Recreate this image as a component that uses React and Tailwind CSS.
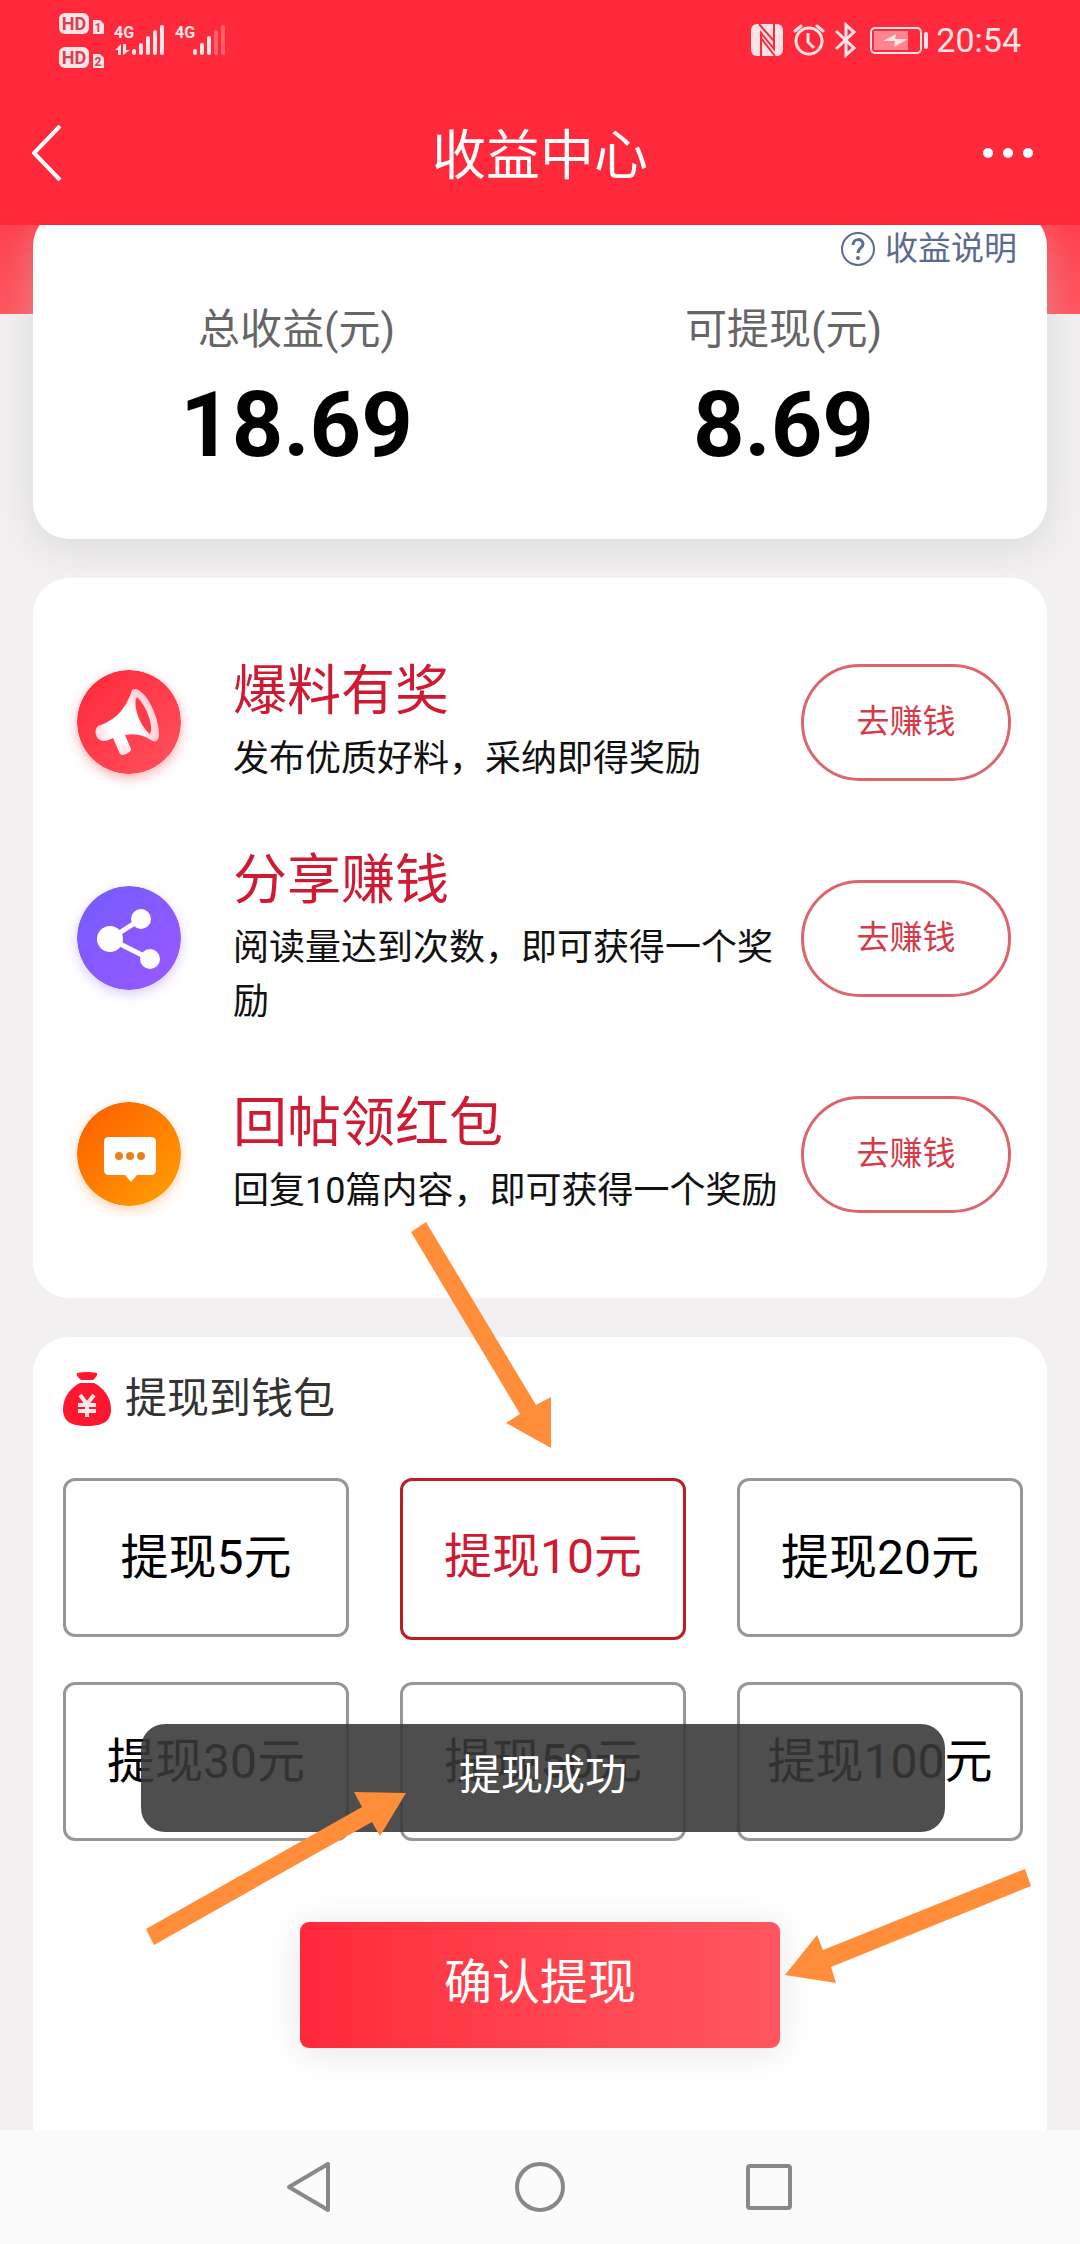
import React, { useState } from 'react';

const tasks = [
  { icon: 'horn', title: '爆料有奖', desc: '发布优质好料，采纳即得奖励' },
  { icon: 'share', title: '分享赚钱', desc: '阅读量达到次数，即可获得一个奖励' },
  { icon: 'chat', title: '回帖领红包', desc: '回复10篇内容，即可获得一个奖励' }
];

const amounts = [5, 10, 20, 30, 50, 100];

const SignalIcons = () => (
  <svg width="170" height="60" viewBox="58 10 170 60" fill="#ffe3e6" fontFamily="Roboto, sans-serif" aria-hidden="true">
    <rect x="59" y="13" width="30" height="21" rx="6" />
    <rect x="59" y="47" width="30" height="21" rx="6" />
    <text x="74" y="30" fontSize="18" fontWeight="700" textAnchor="middle" fill="#d8404f">HD</text>
    <text x="74" y="64" fontSize="18" fontWeight="700" textAnchor="middle" fill="#d8404f">HD</text>
    <path d="M93 20h7l4 4v10h-11zM93 54h7l4 4v10h-11z" />
    <text x="98" y="32" fontSize="12" fontWeight="700" textAnchor="middle" fill="#d8404f">1</text>
    <text x="98" y="66" fontSize="12" fontWeight="700" textAnchor="middle" fill="#d8404f">2</text>
    <text x="114" y="38" fontSize="16" fontWeight="700">4G</text>
    <text x="175" y="38" fontSize="16" fontWeight="700">4G</text>
    <path d="M115 50l6-6v11h-3v-5zM123 44h3v6h4l-7 5z" />
    <g stroke="#ffe3e6" strokeWidth="4" strokeLinecap="round">
      <path d="M134 51v2M141 45v8M148 38v15M155 32v21M162 27v26" />
      <path d="M195 51v2M202 45v8M209 38v15" />
      <path d="M216 32v21M223 27v26" opacity="0.3" />
    </g>
  </svg>
);

const DeviceIcons = () => (
  <svg width="180" height="36" viewBox="750 22 180 36" fill="none" stroke="#ffe3e6" strokeWidth="3" aria-hidden="true">
    <rect x="751" y="24" width="32" height="32" rx="6" fill="#ffe3e6" stroke="none" />
    <path d="M761 56V33l13 16V24" stroke="#ff293c" strokeWidth="2" />
    <path d="M759 24l15 17M761 38l14 18" stroke="#ff293c" strokeWidth="2" />
    <circle cx="809" cy="41" r="13" strokeWidth="3" />
    <path d="M808 33v9l6 6" strokeWidth="3" />
    <path d="M795 31l6-5M823 31l-6-5" strokeLinecap="round" strokeWidth="3" />
    <path d="M836 31l18 17-8 7V25l8 7-18 17" />
    <rect x="871" y="28" width="50" height="25" rx="4" strokeWidth="2" />
    <rect x="874" y="31" width="34" height="19" fill="#ff8490" stroke="none" />
    <path d="M883 41l13-7-1 5h13l-14 8 1-6z" fill="#ffe3e6" stroke="none" />
    <path d="M926 34v13" strokeWidth="4" strokeLinecap="round" />
  </svg>
);

const TaskIcon = ({ type }) => {
  if (type === 'horn') {
    return (
      <svg className="w-26 h-26 shrink-0 rounded-full shadow-[0_4px_12px_rgba(255,60,75,0.4)]" viewBox="0 0 104 104" aria-hidden="true">
        <defs>
          <linearGradient id="hornBg" x1="0" y1="0" x2="1" y2="1">
            <stop offset="0" stopColor="#ff2739" />
            <stop offset="1" stopColor="#ff525d" />
          </linearGradient>
          <radialGradient id="hornFill" cx="0.45" cy="0.55" r="0.6">
            <stop offset="0" stopColor="#fff" />
            <stop offset="0.4" stopColor="#fff" />
            <stop offset="1" stopColor="#ffc4ca" />
          </radialGradient>
        </defs>
        <circle cx="52" cy="52" r="52" fill="url(#hornBg)" />
        <path
          d="M55 20c4-3 9 1 14 7 8 11 13 26 13 38 0 6-4 8-8 5-8-5-16-7-26-5l6 14c1 3-9 8-11 5l-7-16c-3 1-6 3-9 3-8 0-11-10-6-15 15-5 27-14 34-36z"
          fill="url(#hornFill)"
        />
        <path d="M60 27c-5 7 3 30 13 37 4-8-4-29-13-37z" fill="#ff3b4b" />
      </svg>
    );
  }
  if (type === 'share') {
    return (
      <svg className="w-26 h-26 shrink-0 rounded-full shadow-[0_4px_12px_rgba(130,90,255,0.3)]" viewBox="0 0 104 104" aria-hidden="true">
        <defs>
          <linearGradient id="shareBg" x1="0" y1="0" x2="1" y2="1">
            <stop offset="0" stopColor="#735cff" />
            <stop offset="1" stopColor="#9a58ff" />
          </linearGradient>
        </defs>
        <circle cx="52" cy="52" r="52" fill="url(#shareBg)" />
        <path d="M64 33L33 53l40 20" fill="none" stroke="#fff" strokeWidth="5" />
        <circle cx="33" cy="53" r="13" fill="#fff" />
        <circle cx="64" cy="33" r="10" fill="#fff" />
        <circle cx="73" cy="73" r="10" fill="#fff" />
      </svg>
    );
  }
  return (
    <svg className="w-26 h-26 shrink-0 rounded-full shadow-[0_4px_12px_rgba(255,130,40,0.35)]" viewBox="0 0 104 104" aria-hidden="true">
      <defs>
        <linearGradient id="chatBg" x1="0" y1="0" x2="1" y2="1">
          <stop offset="0.1" stopColor="#ff6200" />
          <stop offset="1" stopColor="#ffa200" />
        </linearGradient>
      </defs>
      <circle cx="52" cy="52" r="52" fill="url(#chatBg)" />
      <path d="M32 35h42q5 0 5 5v28q0 5-5 5H60l-6 7-6-7H32q-5 0-5-5V40q0-5 5-5z" fill="#fff" />
      <circle cx="42" cy="54" r="4" fill="#e8821c" />
      <circle cx="53" cy="54" r="4" fill="#e8821c" />
      <circle cx="64" cy="54" r="4" fill="#e8821c" />
    </svg>
  );
};

const MoneyBag = () => (
  <svg className="w-12 h-[54px]" viewBox="0 0 48 54" aria-hidden="true">
    <path d="M14 1q10-2 20 0 1 3-4 7H18q-5-4-4-7z" fill="#ff1730" />
    <path d="M17 11h14c10 5 17 15 17 26 0 11-6 17-24 17S0 48 0 37c0-11 7-21 17-26z" fill="#ff1730" />
    <path d="M17 23l7 9 7-9M24 32v13M15 33h18M15 39h18" fill="none" stroke="#ffe9eb" strokeWidth="4" />
  </svg>
);

const Arrow = ({ className, viewBox, points }) => (
  <svg className={className} viewBox={viewBox} aria-hidden="true">
    <polygon points={points} fill="#ff8d3a" />
  </svg>
);

const App = () => {
  const [selected, setSelected] = useState(10);

  return (
    <div className="h-screen flex flex-col bg-[#f2f0f1] font-['Roboto','Noto_Sans_CJK_SC',sans-serif]" lang="zh-CN">
      <header className="shrink-0 bg-[#ff293c] text-white">
        <div className="h-20 flex items-center justify-between pl-[58px] pr-[59px]">
          <SignalIcons />
          <div className="flex items-center gap-1.5 text-[34px] leading-10 text-[#ffe3e6]">
            <DeviceIcons />
            <span>20:54</span>
          </div>
        </div>
        <div className="h-[145px] flex items-center justify-between pl-8 pr-[47px]">
          <button type="button" aria-label="返回" className="w-20">
            <svg width="30" height="56" viewBox="0 0 30 56" fill="none" stroke="currentColor" strokeWidth="4">
              <path d="M28 1L2 28l26 27" />
            </svg>
          </button>
          <h1 className="text-[54px] leading-[72px] pt-2">收益中心</h1>
          <button type="button" aria-label="更多" className="w-[65px] flex justify-end">
            <svg width="50" height="12" viewBox="0 0 50 12" fill="currentColor">
              <circle cx="5" cy="6" r="5" />
              <circle cx="25" cy="6" r="5" />
              <circle cx="45" cy="6" r="5" />
            </svg>
          </button>
        </div>
      </header>

      <main className="flex-1 min-h-0 overflow-hidden flex flex-col">
        <div className="shrink-0 h-[89px] bg-gradient-to-b from-[#ff414e] to-[#ff555f]" />
        <div className="flex-1 flex flex-col gap-[39px] px-[33px] -mt-[104px]">
          <section className="h-[329px] shrink-0 bg-white rounded-[36px] px-5 pt-[15px] shadow-[0_9px_36px_rgba(195,193,194,0.45)]">
            <a href="#explain" className="flex items-center justify-end gap-2.5 pr-2.5 text-[33px] leading-[48px] text-[#5c6b8f]">
              <svg width="34" height="34" viewBox="0 0 34 34" fill="none" stroke="currentColor" strokeWidth="2" aria-hidden="true">
                <circle cx="17" cy="17" r="16" />
                <path d="M12 13c0-7 10-7 10-1 0 4-5 4-5 9" strokeWidth="3" />
                <circle cx="17" cy="26" r="1" strokeWidth="2" />
              </svg>
              收益说明
            </a>
            <div className="grid grid-cols-2 pt-[27px] text-center">
              <div>
                <p className="text-[42px] leading-[60px] text-[#666]">总收益(元)</p>
                <p className="pt-1.5 text-[90px] leading-[120px] font-bold text-black">18.69</p>
              </div>
              <div>
                <p className="text-[42px] leading-[60px] text-[#666]">可提现(元)</p>
                <p className="pt-1.5 text-[90px] leading-[120px] font-bold text-black">8.69</p>
              </div>
            </div>
          </section>

          <section className="shrink-0 bg-white rounded-[36px] py-9 pl-11 pr-9">
            {tasks.map(t => (
              <div key={t.title} className="h-[216px] flex items-center">
                <TaskIcon type={t.icon} />
                <div className="flex-1 pl-[52px] pb-2">
                  <h2 className="text-[54px] leading-[81px] text-[#cf1a33]">{t.title}</h2>
                  <p className="text-[36px] leading-[54px] text-[#111]">{t.desc}</p>
                </div>
                <button type="button" className="w-[210px] h-[117px] shrink-0 rounded-full border-3 border-[#dc666c] text-[33px] text-[#d43a48]">
                  去赚钱
                </button>
              </div>
            ))}
          </section>

          <section className="relative flex-1 bg-white rounded-t-[36px] pl-[30px] pr-6 pt-8">
            <h2 className="flex items-center gap-3.5 text-[42px] leading-[60px] text-[#333]">
              <MoneyBag /> 提现到钱包
            </h2>

            <div className="grid grid-cols-3 items-start gap-x-[51px] gap-y-[42px] pt-[49px]">
              {amounts.map(n => (
                <button
                  key={n}
                  type="button"
                  aria-pressed={selected === n}
                  onClick={() => setSelected(n)}
                  className={
                    selected === n
                      ? 'h-[162px] pb-1 rounded-xl border-3 border-[#bb1f23] text-[48px] text-[#cf1a33]'
                      : 'h-[159px] rounded-xl border-3 border-[#979797] text-[48px] text-black'
                  }
                >
                  提现{n}元
                </button>
              ))}
            </div>

            <div className="flex justify-center pt-[81px] pr-1.5">
              <button type="button" className="w-[480px] h-[126px] pb-1 rounded-[9px] bg-gradient-to-r from-[#ff273b] to-[#ff565f] text-[48px] text-white shadow-[0_4px_40px_rgba(0,0,0,0.1)]">
                确认提现
              </button>
            </div>

            <div role="status" className="absolute top-[387px] left-[108px] right-[102px] h-[108px] flex items-center justify-center pb-1.5 rounded-3xl bg-[#383838]/89 text-[42px] text-white">
              提现成功
            </div>

            {/* hint arrows drawn over the form */}
            <Arrow
              className="absolute left-[377px] -top-[117px] w-[142px] h-[228px]"
              viewBox="410 1220 142 228"
              points="411,1232 426,1222 536,1405 551,1397 551,1448 506,1423 520,1414"
            />
            <Arrow
              className="absolute left-[113px] top-[453px] w-[260px] h-[157px]"
              viewBox="146 1790 260 157"
              points="146,1929 362,1807 354,1792 406,1793 380,1836 372,1822 154,1945"
            />
            <Arrow
              className="absolute left-[752px] top-[531px] w-[248px] h-[116px]"
              viewBox="785 1868 248 116"
              points="1025,1869 1031,1886 831,1967 836,1983 785,1975 817,1935 823,1950"
            />
          </section>
        </div>
      </main>

      <nav className="h-[114px] shrink-0 bg-[#fbfbfb] flex items-center justify-center text-[#888]">
        <button type="button" aria-label="后退" className="w-[229px] flex justify-center">
          <svg width="50" height="52" viewBox="0 0 50 52" fill="none" stroke="currentColor" strokeWidth="4" strokeLinejoin="round">
            <path d="M42 3v46L3 26z" />
          </svg>
        </button>
        <button type="button" aria-label="主页" className="w-[229px] flex justify-center">
          <svg width="50" height="50" viewBox="0 0 50 50" fill="none" stroke="currentColor" strokeWidth="4">
            <circle cx="25" cy="25" r="23" />
          </svg>
        </button>
        <button type="button" aria-label="最近任务" className="w-[229px] flex justify-center">
          <svg width="46" height="46" viewBox="0 0 46 46" fill="none" stroke="currentColor" strokeWidth="4">
            <rect x="2" y="2" width="42" height="42" rx="2" />
          </svg>
        </button>
      </nav>
    </div>
  );
};

export default App;
